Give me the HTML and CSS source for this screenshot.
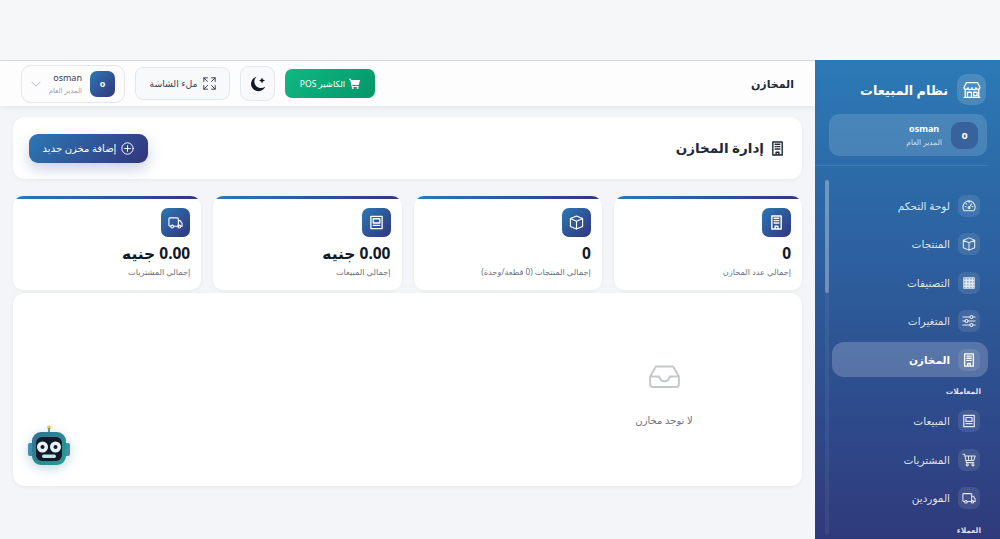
FILE: index.html
```html
<!DOCTYPE html>
<html lang="ar" dir="rtl">
<head>
<meta charset="utf-8">
<title>المخازن</title>
<link rel="stylesheet" href="styles.css">
</head>
<body>
<svg class="defs" width="0" height="0" aria-hidden="true">
  <defs>
    <symbol id="i-shop" viewBox="0 0 16 16"><path d="M3 1.500h10l2 4a1.750 1.750 0 0 1-3.500.4 1.750 1.750 0 0 1-3.500 0 1.750 1.750 0 0 1-3.500 0A1.750 1.750 0 0 1 1 5.500zM2 7.500v7h12v-7M4 14.500v-4.500h3.500v4.500M9.500 10h3v3h-3zM1 14.500h14"/></symbol>
    <symbol id="i-speed" viewBox="0 0 16 16"><path d="M2.500 13.500a7 7 0 1 1 11 0zM8 9.500l3-4M8 3v1M3.500 8.500h1M11.500 8.500h1M4.800 5.300l.7.7"/><circle cx="8" cy="10" r="1.200"/></symbol>
    <symbol id="i-box" viewBox="0 0 16 16"><path d="M8 1l6.500 2.800v8.400L8 15l-6.500-2.800V3.800zM1.500 3.800L8 6.600l6.500-2.800M8 6.600V15"/></symbol>
    <symbol id="i-grid" viewBox="0 0 16 16"><path d="M2 2h2.500v2.500H2zM5.500 2H8v2.500H5.500zM9 2h2.500v2.500H9zM12 2h2v2.500h-2zM2 5.500h2.500V8H2zM5.500 5.500H8V8H5.500zM9 5.500h2.500V8H9zM12 5.500h2V8h-2zM2 9h2.500v2.500H2zM5.500 9H8v2.500H5.500zM9 9h2.500v2.500H9zM12 9h2v2.500h-2zM2 12h2.500v2H2zM5.500 12H8v2H5.500zM9 12h2.500v2H9zM12 12h2v2h-2z"/></symbol>
    <symbol id="i-sliders" viewBox="0 0 16 16"><path d="M1 3.500h8M12.500 3.500H15M1 8h2.500M7 8h8M1 12.500h8M12.500 12.500H15"/><circle cx="10.700" cy="3.500" r="1.700"/><circle cx="5.200" cy="8" r="1.700"/><circle cx="10.700" cy="12.500" r="1.700"/></symbol>
    <symbol id="i-building" viewBox="0 0 16 16"><path d="M3 1h10v14H3zM6.500 15v-3h3v3M5.500 3.500h1M7.500 3.500h1M9.500 3.500h1M5.500 6h1M7.500 6h1M9.500 6h1M5.500 8.500h1M7.500 8.500h1M9.500 8.500h1" stroke-width="1.500"/></symbol>
    <symbol id="i-journal" viewBox="0 0 16 16"><path d="M2 1.500h12v13H2zM4.500 4h7v4.500h-7zM4.500 11h7" stroke-width="1.400"/></symbol>
    <symbol id="i-cart" viewBox="0 0 16 16"><path d="M1 1.500h2l2 9.500h8.500M3.400 3.500H15l-1.500 5H4.500M7.500 3.500v5M11 3.500v5"/><circle cx="6" cy="13.500" r="1.200"/><circle cx="12.500" cy="13.500" r="1.200"/></symbol>
    <symbol id="i-truck" viewBox="0 0 16 16"><path d="M3 12H2a1 1 0 0 1-1-1V4a1 1 0 0 1 1-1h8a1 1 0 0 1 1 1v8H6M11 6h2l2 3v3h-1.500M11 12h.500"/><circle cx="4.500" cy="12.300" r="1.500"/><circle cx="12" cy="12.300" r="1.500"/></symbol>
    <symbol id="i-plus" viewBox="0 0 16 16"><circle cx="8" cy="8" r="7"/><path d="M8 4.500v7M4.500 8h7"/></symbol>
    <symbol id="i-full" viewBox="0 0 16 16"><path d="M1 5.500V1h4.500M1 1l4.500 4.500M15 5.500V1h-4.500M15 1l-4.500 4.500M1 10.500V15h4.500M1 15l4.500-4.500M15 10.500V15h-4.500M15 15l-4.500-4.500"/></symbol>
    <symbol id="i-chev" viewBox="0 0 16 16"><path d="M1.500 5l6.500 6.500L14.500 5"/></symbol>
  </defs>
</svg>

<div class="shell">
  <aside class="sidebar">
    <div class="brand">
      <span class="brand-logo"><svg class="ic ic-18"><use href="#i-shop"/></svg></span>
      <span class="brand-name">نظام المبيعات</span>
    </div>
    <div class="side-user">
      <span class="side-avatar">o</span>
      <div class="side-user-text">
        <strong>osman</strong>
        <small>المدير العام</small>
      </div>
    </div>
    <div class="side-rule"></div>
    <div class="side-scroll">
      <nav class="nav">
        <a class="nav-item"><span class="nav-ic"><svg class="ic"><use href="#i-speed"/></svg></span>لوحة التحكم</a>
        <a class="nav-item"><span class="nav-ic"><svg class="ic"><use href="#i-box"/></svg></span>المنتجات</a>
        <a class="nav-item"><span class="nav-ic"><svg class="ic"><use href="#i-grid"/></svg></span>التصنيفات</a>
        <a class="nav-item"><span class="nav-ic"><svg class="ic"><use href="#i-sliders"/></svg></span>المتغيرات</a>
        <a class="nav-item active"><span class="nav-ic"><svg class="ic"><use href="#i-building"/></svg></span>المخازن</a>
        <div class="nav-label">المعاملات</div>
        <a class="nav-item"><span class="nav-ic"><svg class="ic"><use href="#i-journal"/></svg></span>المبيعات</a>
        <a class="nav-item"><span class="nav-ic"><svg class="ic"><use href="#i-cart"/></svg></span>المشتريات</a>
        <a class="nav-item"><span class="nav-ic"><svg class="ic"><use href="#i-truck"/></svg></span>الموردين</a>
        <div class="nav-label last">العملاء</div>
      </nav>
      <div class="scroll-track"><div class="scroll-thumb"></div></div>
    </div>
  </aside>

  <main class="main">
    <header class="topbar">
      <h1 class="page-name">المخازن</h1>
      <div class="top-actions">
        <button class="btn-pos"><svg width="11" height="11" viewBox="0 0 16 16"><path class="white-fill" d="M0 1h2.800l.5 2H16l-1.800 7H4.800l.4 1.500H14V13H4L1.700 2.500H0z"/><circle class="white-fill" cx="5.500" cy="14.500" r="1.500"/><circle class="white-fill" cx="12.500" cy="14.500" r="1.500"/></svg><span>الكاشير POS</span></button>
        <button class="btn-moon">
          <svg width="16" height="16" viewBox="0 0 16 16"><path class="moon" d="M6.500.8a7.300 7.300 0 1 0 8.700 9.600A6.200 6.200 0 0 1 6.500.8z"/><path class="moon" d="M12 1.500l.9 2.100 2.100.9-2.100.9-.9 2.100-.9-2.100-2.100-.9 2.100-.9z"/></svg>
        </button>
        <button class="btn-full"><svg class="ic ic-13"><use href="#i-full"/></svg><span>ملء الشاشة</span></button>
        <div class="top-user">
          <span class="top-avatar">o</span>
          <div class="top-user-text">
            <strong>osman</strong>
            <small>المدير العام</small>
          </div>
          <svg class="ic chev"><use href="#i-chev"/></svg>
        </div>
      </div>
    </header>

    <div class="content">
      <section class="title-card">
        <h2 class="title"><svg class="ic ic-15 dark"><use href="#i-building"/></svg>إدارة المخازن</h2>
        <button class="btn-add"><svg class="ic ic-13"><use href="#i-plus"/></svg>إضافة مخزن جديد</button>
      </section>

      <section class="stats">
        <article class="stat">
          <span class="stat-ic"><svg class="ic ic-15"><use href="#i-building"/></svg></span>
          <div class="stat-value">0</div>
          <div class="stat-label">إجمالي عدد المخازن</div>
        </article>
        <article class="stat">
          <span class="stat-ic"><svg class="ic ic-15"><use href="#i-box"/></svg></span>
          <div class="stat-value">0</div>
          <div class="stat-label">إجمالي المنتجات (0 قطعة/وحدة)</div>
        </article>
        <article class="stat">
          <span class="stat-ic"><svg class="ic ic-15"><use href="#i-journal"/></svg></span>
          <div class="stat-value">0.00 جنيه</div>
          <div class="stat-label">إجمالي المبيعات</div>
        </article>
        <article class="stat">
          <span class="stat-ic"><svg class="ic ic-15"><use href="#i-truck"/></svg></span>
          <div class="stat-value">0.00 جنيه</div>
          <div class="stat-label">إجمالي المشتريات</div>
        </article>
      </section>

      <section class="empty">
        <div class="empty-col">
          <svg class="empty-ic" viewBox="0 0 32 24"><path d="M7 1.500h18l6 10.500v8a3 3 0 0 1-3 3H4a3 3 0 0 1-3-3v-8zM1 12h9.500c.8 3.500 3 5 5.500 5s4.700-1.500 5.500-5H31"/></svg>
          <p class="empty-text">لا توجد مخازن</p>
        </div>
      </section>
    </div>

    <div class="robot">
      <svg width="44" height="48" viewBox="0 0 44 48">
        <defs>
          <linearGradient id="rb" x1="0" y1="0" x2="1" y2="1"><stop offset="0" stop-color="#2f6f96"/><stop offset="1" stop-color="#25a08f"/></linearGradient>
        </defs>
        <circle cx="22" cy="2.500" r="2" fill="#f4c542"/>
        <rect x="21" y="3" width="2" height="5" fill="#6f8f9c"/>
        <rect x="1" y="18" width="6" height="13" rx="2" fill="#3f8fb0"/>
        <rect x="37" y="18" width="6" height="13" rx="2" fill="#3f8fb0"/>
        <rect x="5" y="7" width="34" height="33" rx="9" fill="url(#rb)"/>
        <rect x="9" y="12" width="26" height="24" rx="6" fill="#0f1a2b"/>
        <circle cx="15.500" cy="22" r="5.500" fill="#e9f4f7"/>
        <circle cx="28.500" cy="22" r="5.500" fill="#e9f4f7"/>
        <circle cx="15.500" cy="22" r="2" fill="#0f1a2b"/>
        <circle cx="28.500" cy="22" r="2" fill="#0f1a2b"/>
        <rect x="15" y="29.500" width="14" height="3.500" rx="1.700" fill="#bfe5e3"/>
      </svg>
    </div>
  </main>
</div>
</body>
</html>
```

FILE: styles.css
```css
* { box-sizing: border-box; }

html, body {
  margin: 0;
  height: 100%;
  overflow: hidden;
}

body {
  background: #f6f7f9;
  font-family: "Noto Sans", "DejaVu Sans", sans-serif;
  color: #111827;
  padding-top: 60px;
}

.defs { position: absolute; }

.ic {
  width: 14px;
  height: 14px;
  fill: none;
  stroke: currentColor;
  stroke-width: 1.2;
  stroke-linecap: round;
  stroke-linejoin: round;
  flex: none;
}
.ic-18 { width: 18px; height: 18px; }
.ic-15 { width: 15px; height: 15px; }
.ic-13 { width: 13px; height: 13px; }
.dark { color: #1f2937; }

.shell {
  display: flex;
  height: 479px;
}

/* Sidebar */
.sidebar {
  width: 185px;
  flex: none;
  background: linear-gradient(180deg, #2b7ab6 0%, #2f3a7c 100%);
  color: #fff;
  padding: 14px 12px 0 0;
  overflow: hidden;
}

.brand {
  display: flex;
  align-items: center;
  gap: 9px;
  margin-inline-start: 2px;
  height: 31px;
}
.brand-logo {
  width: 29px;
  height: 31px;
  border-radius: 10px;
  background: rgba(255, 255, 255, .15);
  display: flex;
  align-items: center;
  justify-content: center;
}
.brand-name {
  font-size: 12.800px;
  font-weight: 700;
}

.side-user {
  margin: 9px 1px 0 14px;
  height: 42px;
  padding-inline-start: 9px;
  display: flex;
  align-items: center;
  gap: 9px;
  background: rgba(255, 255, 255, .14);
  border-radius: 10px;
}
.side-avatar {
  width: 27px;
  height: 27px;
  border-radius: 9px;
  background: rgba(48, 80, 140, .65);
  display: flex;
  align-items: center;
  justify-content: center;
  font-size: 10px;
  font-weight: 700;
}
.side-user-text {
  display: flex;
  flex-direction: column;
  gap: 3px;
  align-items: center;
  line-height: 11px;
}
.side-user-text strong { font-size: 9px; }
.side-user-text small { font-size: 7.500px; opacity: .75; white-space: nowrap; }

.side-rule {
  height: 1px;
  margin: 9px 0 0 0;
  background: rgba(255, 255, 255, .1);
}

.side-scroll {
  display: flex;
  margin-top: 14px;
  height: 360px;
}
.nav {
  width: 156px;
  flex: none;
  padding-top: 7px;
}
.nav-item {
  display: flex;
  align-items: center;
  gap: 8px;
  height: 38.300px;
  padding-inline-start: 8px;
  font-size: 10.500px;
  color: rgba(255, 255, 255, .85);
  border-radius: 12px;
}
.nav-ic {
  width: 22px;
  height: 22px;
  border-radius: 7px;
  background: rgba(255, 255, 255, .1);
  display: flex;
  align-items: center;
  justify-content: center;
  flex: none;
}
.nav-item.active {
  height: 35px;
  margin-top: 2px;
  background: rgba(255, 255, 255, .2);
  color: #fff;
  font-weight: 700;
}
.nav-label {
  height: 13px;
  margin: 8px 0 4px;
  padding-inline-start: 7px;
  font-size: 7.500px;
  font-weight: 700;
  line-height: 13px;
  color: rgba(255, 255, 255, .85);
}
.nav-label.last { margin-top: 7px; }

.scroll-track {
  width: 4px;
  margin-inline-start: 3px;
  background: rgba(255, 255, 255, .06);
  border-radius: 2px;
  height: 355px;
}
.scroll-thumb {
  height: 113px;
  background: rgba(255, 255, 255, .28);
  border-radius: 2px;
}

/* Main */
.main {
  flex: 1;
  position: relative;
  background: #f3f5f8;
  border-top: 1px solid #d9dce1;
  min-width: 0;
}

.topbar {
  height: 45px;
  background: #fdfdfe;
  display: flex;
  align-items: center;
  justify-content: space-between;
  padding: 0 21px;
  box-shadow: 0 2px 6px rgba(15, 23, 42, .06);
}
.page-name {
  margin: 0;
  font-size: 11px;
  font-weight: 700;
  color: #1f2937;
}
.top-actions {
  display: flex;
  align-items: center;
  gap: 10px;
}

button {
  font-family: inherit;
  border: 0;
  padding: 0;
  display: flex;
  align-items: center;
  justify-content: center;
}

.btn-pos {
  width: 90px;
  height: 29px;
  gap: 4px;
  border-radius: 7px;
  background: linear-gradient(135deg, #10b981, #059669);
  color: #fff;
  font-size: 8.500px;
}
.white-fill { fill: #fff; }

.btn-moon {
  width: 35px;
  height: 35px;
  background: #f8f9fb;
  border: 1px solid #e5e7eb;
  border-radius: 9px;
}
.moon { fill: #111827; }

.btn-full {
  width: 95px;
  height: 33px;
  gap: 5px;
  background: #f8f9fb;
  border: 1px solid #e5e7eb;
  border-radius: 8px;
  color: #374151;
  font-size: 9.300px;
}

.top-user {
  width: 104px;
  height: 38px;
  padding: 0 9px 0 11px;
  display: flex;
  align-items: center;
  gap: 8px;
  background: #fcfcfd;
  border: 1px solid #e5e7eb;
  border-radius: 10px;
}
.top-avatar {
  width: 25px;
  height: 26px;
  border-radius: 7px;
  background: linear-gradient(135deg, #2b78b4, #33357c);
  color: #fff;
  font-size: 9px;
  font-weight: 700;
  display: flex;
  align-items: center;
  justify-content: center;
  flex: none;
}
.top-user-text {
  display: flex;
  flex-direction: column;
  gap: 2px;
  align-items: flex-start;
  line-height: 11px;
}
.top-user-text strong { font-size: 9px; font-weight: 400; color: #374151; }
.top-user-text small { font-size: 7px; color: #9ca3af; white-space: nowrap; }
.chev { width: 10px; height: 10px; color: #9ca3af; margin-inline-start: auto; }

.content {
  padding: 11px 13px 0;
  display: flex;
  flex-direction: column;
}

.title-card {
  height: 62px;
  padding: 0 17px 0 16px;
  background: #fff;
  border-radius: 12px;
  display: flex;
  align-items: center;
  justify-content: space-between;
  box-shadow: 0 1px 4px rgba(15, 23, 42, .05);
}
.title {
  margin: 0;
  display: flex;
  align-items: center;
  gap: 6px;
  font-size: 13.500px;
  font-weight: 700;
  color: #1f2937;
}
.btn-add {
  width: 119px;
  height: 29px;
  gap: 5px;
  border-radius: 9px;
  background: linear-gradient(135deg, #2b78b4, #33357c);
  color: #fff;
  font-size: 10px;
  box-shadow: 0 6px 14px rgba(48, 70, 140, .25);
}

.stats {
  display: grid;
  grid-template-columns: repeat(4, 1fr);
  gap: 12px;
  margin-top: 17px;
}
.stat {
  height: 94px;
  background: #fff;
  border-radius: 10px;
  padding: 12px 11px 0;
  position: relative;
  box-shadow: 0 1px 4px rgba(15, 23, 42, .05);
  overflow: hidden;
}
.stat::before {
  content: "";
  position: absolute;
  top: 0;
  left: 0;
  right: 0;
  height: 3px;
  background: linear-gradient(90deg, #2b7ab6, #33357c);
}
.stat-ic {
  width: 29px;
  height: 29px;
  border-radius: 7px;
  background: linear-gradient(135deg, #2b78b4, #33357c);
  color: #fff;
  display: flex;
  align-items: center;
  justify-content: center;
}
.stat-value {
  margin-top: 6px;
  font-size: 15.500px;
  line-height: 20px;
  font-weight: 700;
  color: #111827;
}
.stat-label {
  margin-top: 3px;
  font-size: 8.200px;
  line-height: 12px;
  color: #6b7280;
}

.empty {
  height: 193px;
  margin-top: 3px;
  background: #fff;
  border-radius: 12px;
  box-shadow: 0 1px 4px rgba(15, 23, 42, .06);
}
.empty-col {
  width: 276px;
  display: flex;
  flex-direction: column;
  align-items: center;
  padding-top: 72px;
}
.empty-ic {
  width: 33px;
  height: 23px;
  fill: none;
  stroke: #c4c7cc;
  stroke-width: 2;
  stroke-linejoin: round;
}
.empty-text {
  margin: 26px 0 0;
  font-size: 10px;
  line-height: 13px;
  color: #6b7280;
}

.robot {
  position: absolute;
  left: 27px;
  top: 364px;
  width: 44px;
  height: 48px;
  filter: drop-shadow(0 3px 6px rgba(40, 120, 150, .3));
}
```
